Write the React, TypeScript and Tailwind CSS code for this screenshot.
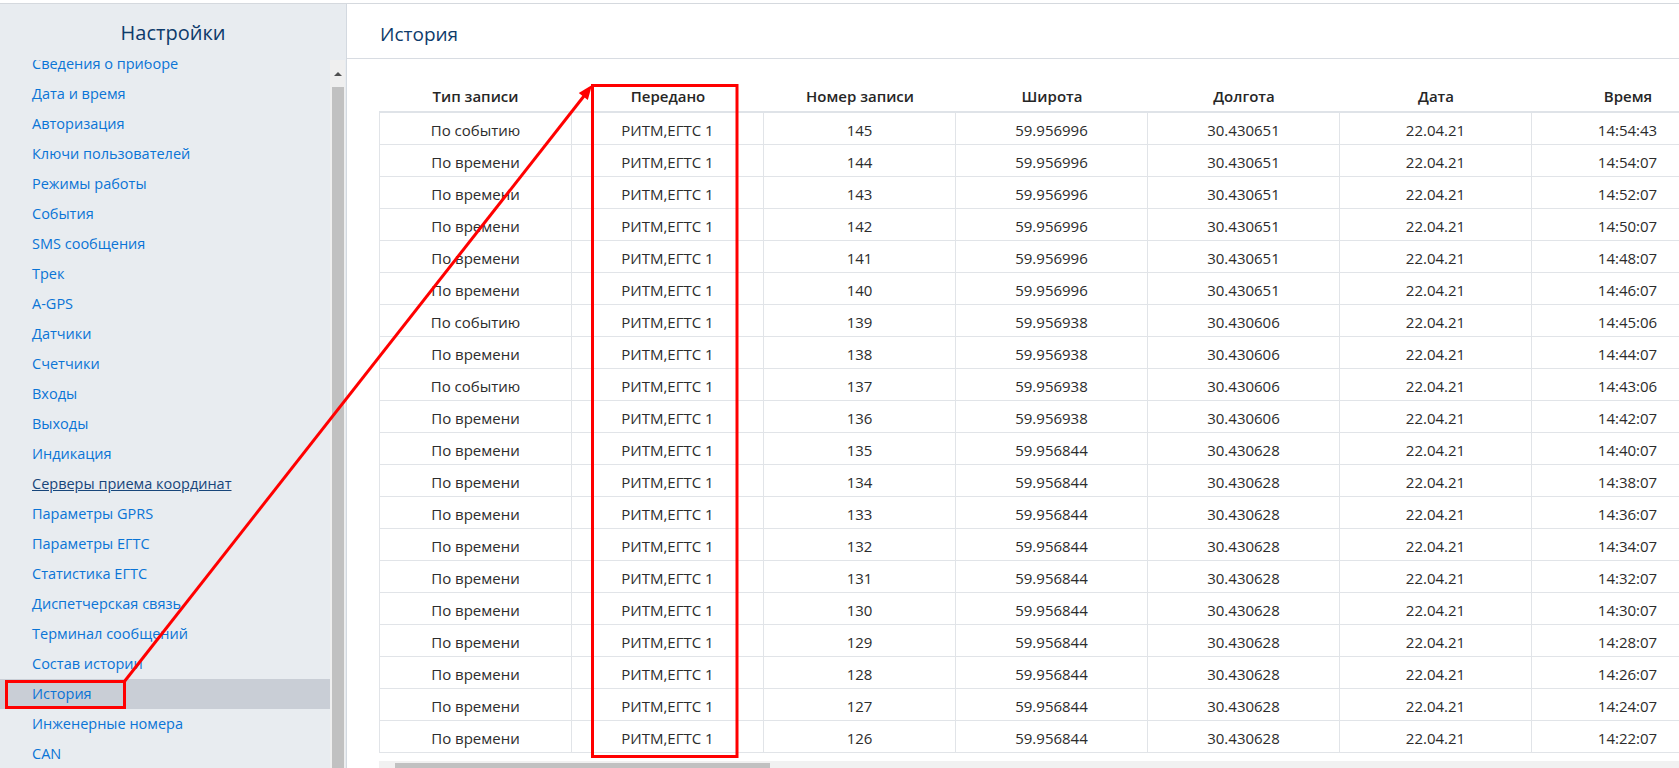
import React from "react";

const menu = [
  "Сведения о приборе",
  "Дата и время",
  "Авторизация",
  "Ключи пользователей",
  "Режимы работы",
  "События",
  "SMS сообщения",
  "Трек",
  "A-GPS",
  "Датчики",
  "Счетчики",
  "Входы",
  "Выходы",
  "Индикация",
  "Серверы приема координат",
  "Параметры GPRS",
  "Параметры ЕГТС",
  "Статистика ЕГТС",
  "Диспетчерская связь",
  "Терминал сообщений",
  "Состав истории",
  "История",
  "Инженерные номера",
  "CAN",
];

const headers = ["Тип записи", "Передано", "Номер записи", "Широта", "Долгота", "Дата", "Время"];

type Row = [string, number, string, string, string];

const rows: Row[] = [
  ["По событию", 145, "59.956996", "30.430651", "14:54:43"],
  ["По времени", 144, "59.956996", "30.430651", "14:54:07"],
  ["По времени", 143, "59.956996", "30.430651", "14:52:07"],
  ["По времени", 142, "59.956996", "30.430651", "14:50:07"],
  ["По времени", 141, "59.956996", "30.430651", "14:48:07"],
  ["По времени", 140, "59.956996", "30.430651", "14:46:07"],
  ["По событию", 139, "59.956938", "30.430606", "14:45:06"],
  ["По времени", 138, "59.956938", "30.430606", "14:44:07"],
  ["По событию", 137, "59.956938", "30.430606", "14:43:06"],
  ["По времени", 136, "59.956938", "30.430606", "14:42:07"],
  ["По времени", 135, "59.956844", "30.430628", "14:40:07"],
  ["По времени", 134, "59.956844", "30.430628", "14:38:07"],
  ["По времени", 133, "59.956844", "30.430628", "14:36:07"],
  ["По времени", 132, "59.956844", "30.430628", "14:34:07"],
  ["По времени", 131, "59.956844", "30.430628", "14:32:07"],
  ["По времени", 130, "59.956844", "30.430628", "14:30:07"],
  ["По времени", 129, "59.956844", "30.430628", "14:28:07"],
  ["По времени", 128, "59.956844", "30.430628", "14:26:07"],
  ["По времени", 127, "59.956844", "30.430628", "14:24:07"],
  ["По времени", 126, "59.956844", "30.430628", "14:22:07"],
];

const font = { fontFamily: '"Open Sans", "Noto Sans", sans-serif' };

const Sidebar = () => (
  <div className="w-[347px] shrink-0 flex flex-col bg-[#e8ecf0] border-r border-[#d3d9e0]">
    <div className="h-[56px] flex items-center justify-center pt-[2px] text-[20px] font-medium text-[#0e3b6b]">
      Настройки
    </div>
    <div className="flex-1 flex overflow-hidden">
      <div className="flex-1 overflow-hidden">
        <ul className="-mt-[11px]">
          {menu.map((item) => (
            <li
              key={item}
              className={
                "h-[30px] flex items-center pl-[32px] text-[14.5px] " +
                (item === "История" ? "bg-[#c9ced6] " : "") +
                (item === "Серверы приема координат" ? "text-[#17457a] underline" : "text-[#0a74d6]")
              }
            >
              {item}
            </li>
          ))}
        </ul>
      </div>
      {/* scrollbar */}
      <div className="w-[15px] mr-[1px] bg-[#efefef] flex flex-col items-center">
        <div className="h-[27px] flex items-center justify-center">
          <div className="w-0 h-0 border-l-[4px] border-r-[4px] border-b-[4px] border-l-transparent border-r-transparent border-b-[#505050]" />
        </div>
        <div className="w-[12px] flex-1 bg-[#c1c1c1]" />
      </div>
    </div>
  </div>
);

const HistoryTable = () => (
  <div className="w-[1347px]">
    <div className="flex h-[33px] pt-[2px] border-b-2 border-[#dfe3e8] text-[15px] font-semibold text-[#262626]">
      {headers.map((h, i) => (
        <div key={h} className={(i === 0 ? "w-[193px]" : "w-[192px]") + " flex items-center justify-center"}>
          {h}
        </div>
      ))}
    </div>
    {rows.map(([type, num, lat, lon, time]) => {
      const cells = [type, "РИТМ,ЕГТС 1", String(num), lat, lon, "22.04.21", time];
      return (
        <div key={num} className="flex h-[32px] border-b border-[#e1e4e8] text-[15px] text-[#2c2c2c]">
          {cells.map((c, i) => (
            <div
              key={i}
              className={
                (i === 0 ? "w-[193px] border-l " : "w-[192px] ") +
                "border-r border-[#e1e4e8] flex items-center justify-center pt-[3px]"
              }
            >
              {c}
            </div>
          ))}
        </div>
      );
    })}
  </div>
);

const Annotations = () => (
  <svg className="absolute inset-0 pointer-events-none" width="1679" height="768">
    <rect x="592.5" y="85.5" width="144.5" height="671" fill="none" stroke="#ff0000" strokeWidth="3" />
    <rect x="6.5" y="681.5" width="118" height="26" fill="none" stroke="#ff0000" strokeWidth="3" />
    <line x1="124" y1="682" x2="584" y2="96" stroke="#ff0000" strokeWidth="3" />
    <polygon points="592,85 587.8,100 578.8,93" fill="#ff0000" />
  </svg>
);

export default function App() {
  return (
    <div className="relative w-[1679px] h-[768px] overflow-hidden bg-white pt-[3px]" style={font}>
      <div className="h-full flex border-t border-[#d5d9de]">
        <Sidebar />
        <div className="flex-1 flex flex-col overflow-hidden bg-white">
          <div className="h-[55px] shrink-0 border-b border-[#d8dce2] flex items-center pl-[33px] pt-[6px] text-[19px] font-medium text-[#0e3b6b]">
            История
          </div>
          <div className="flex-1 overflow-hidden pl-[32px] pt-[21px]">
            <HistoryTable />
            <div className="mt-[8px] h-[17px] bg-[#f1f1f1] flex items-start">
              <div className="ml-[16px] w-[375px] h-[6px] mt-[2px] bg-[#c1c1c1]" />
            </div>
          </div>
        </div>
      </div>
      <Annotations />
    </div>
  );
}
